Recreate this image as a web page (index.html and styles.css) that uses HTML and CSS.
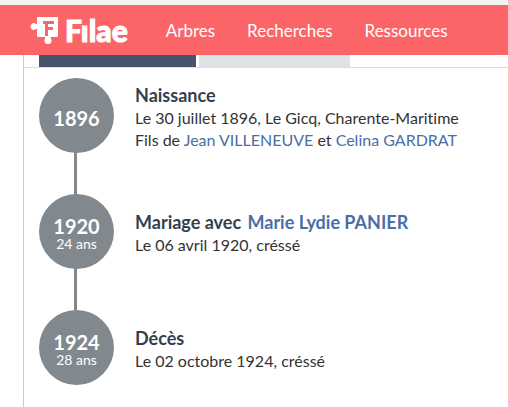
FILE: index.html
```html
<!DOCTYPE html>
<html lang="fr">

<head>
    <meta charset="UTF-8">
    <meta name="viewport" content="width=device-width, initial-scale=1.0">
    <title>Filae</title>
    <link rel="stylesheet" href="styles.css">
</head>

<body>
    <header class="header">
        <a class="logo" href="#">
            <svg class="logo-icon" viewBox="0 0 28 28" aria-hidden="true">
                <path fill="#fff" d="M8 1h19q1 0 1 1v18q0 1-1 1h-6v2a3.500 3.500 0 1 1-6 0v-2H8q-1 0-1-1v-7H6a3.300 3.300 0 1 1 0-5h1V2q0-1 1-1z" />
                <path fill="#fb6568" d="M13 5h11v3h-6v3h5v3h-5v6h-3V8h-2z" />
            </svg>
            <span class="logo-text">Fılae</span>
        </a>
        <nav class="nav">
            <a href="#">Arbres</a>
            <a href="#">Recherches</a>
            <a href="#">Ressources</a>
        </nav>
    </header>

    <main class="panel">
        <div class="tabs">
            <div class="tab active"></div>
            <div class="tab"></div>
        </div>
        <ol class="timeline">
            <li class="event">
                <div class="circle"><span class="year">1896</span></div>
                <div class="details">
                    <h2>Naissance</h2>
                    <p>Le 30 juillet 1896, Le Gicq, Charente-Maritime</p>
                    <p>Fils de <a href="#">Jean VILLENEUVE</a> et <a href="#">Celina GARDRAT</a></p>
                </div>
            </li>
            <li class="event">
                <div class="circle"><span class="year">1920</span><span class="age">24 ans</span></div>
                <div class="details">
                    <h2>Mariage avec <a class="spouse" href="#">Marie Lydie PANIER</a></h2>
                    <p>Le 06 avril 1920, créssé</p>
                </div>
            </li>
            <li class="event">
                <div class="circle"><span class="year">1924</span><span class="age">28 ans</span></div>
                <div class="details">
                    <h2>Décès</h2>
                    <p>Le 02 octobre 1924, créssé</p>
                </div>
            </li>
        </ol>
    </main>
</body>

</html>
```

FILE: styles.css
```css
* {
    box-sizing: border-box;
}

body {
    display: flex;
    flex-direction: column;
    min-height: 100vh;
    margin: 0;
    border-top: 5px solid #f2f3f3;
    background-color: #fff;
    color: #333;
    font-family: Lato, sans-serif;
    font-size: 16px;
    font-variant-ligatures: none;
    line-height: 22px;
}

a {
    color: #4a6ea5;
    text-decoration: none;
}

.header {
    display: flex;
    align-items: center;
    gap: 38px;
    height: 50px;
    padding: 0 30px;
    background-color: #fb6568;
}

.logo {
    display: flex;
    align-items: center;
    gap: 7px;
    color: #fff;
}

.logo-icon {
    width: 28px;
    height: 28px;
}

.logo-text {
    font-size: 30px;
    font-weight: 900;
    line-height: 32px;
    -webkit-text-stroke: 1px #fff;
}

.nav {
    display: flex;
    gap: 32px;
    padding-top: 2px;
}

.nav a {
    color: #fff;
    font-size: 17px;
}

.panel {
    flex: 1;
    margin-left: 23px;
    border-left: 1px solid #ccc;
}

.tabs {
    display: flex;
    gap: 3px;
    height: 13px;
    padding-left: 15px;
    border-bottom: 1px solid #dcdfe2;
}

.tab {
    width: 151px;
    background-color: #dfe3e6;
}

.tab.active {
    width: 157px;
    background-color: #47546b;
}

.timeline {
    margin: 0;
    padding: 10px 15px 0;
    list-style: none;
}

.event {
    display: flex;
    gap: 21px;
    min-height: 116px;
    background: linear-gradient(#81898f, #81898f) 35px 0 / 3px 100% no-repeat;
}

.event:last-child {
    min-height: 75px;
    background: none;
}

.circle {
    display: flex;
    flex-direction: column;
    flex-shrink: 0;
    align-items: center;
    justify-content: center;
    width: 75px;
    height: 75px;
    padding-top: 5px;
    border-radius: 50%;
    background-color: #81898f;
    color: #fff;
}

.year {
    font-size: 20px;
    font-weight: bold;
    line-height: 20px;
}

.age {
    font-size: 14px;
    line-height: 16px;
}

.details {
    display: flex;
    flex-direction: column;
    justify-content: center;
    height: 78px;
}

.details h2 {
    margin: 0;
    color: #333f4f;
    font-size: 18px;
    line-height: 24px;
}

.details p {
    margin: 0;
}

.spouse {
    margin-left: 2px;
}
```
